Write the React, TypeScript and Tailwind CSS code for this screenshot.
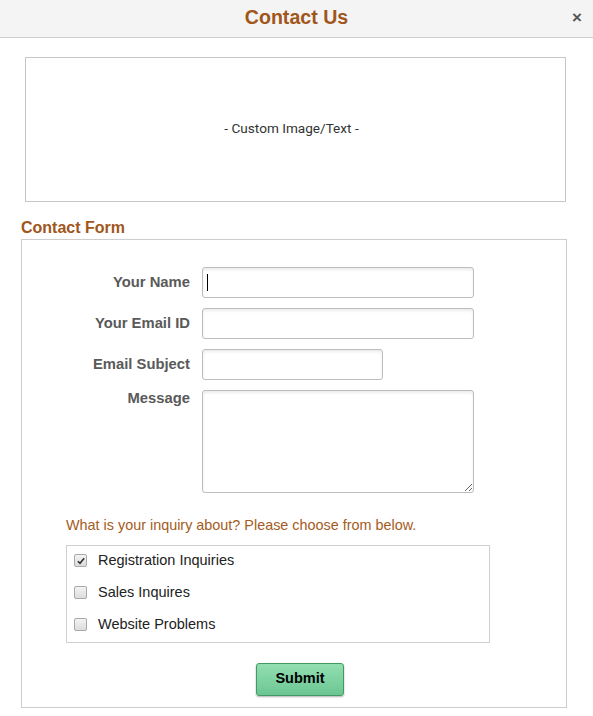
import { useState } from "react";

const options = ["Registration Inquiries", "Sales Inquires", "Website Problems"];

function Box({ checked }: { checked: boolean }) {
  return (
    <span className="flex h-[13px] w-[13px] items-center justify-center rounded-[2px] border border-[#a8a8a8] bg-gradient-to-b from-[#f4f4f4] to-[#dcdcdc]">
      {checked && (
        <svg viewBox="0 0 12 12" className="h-[10px] w-[10px]">
          <path d="M2.2 6.3 L4.8 8.8 L9.8 2.8" fill="none" stroke="#333" strokeWidth="2" />
        </svg>
      )}
    </span>
  );
}

export default function App() {
  const [picked, setPicked] = useState<string[]>(["Registration Inquiries"]);

  const toggle = (o: string) =>
    setPicked((p) => (p.includes(o) ? p.filter((x) => x !== o) : [...p, o]));

  const input =
    "h-[31px] rounded-[3px] border border-[#bdbdbd] bg-white px-2 text-[14px] shadow-[inset_0_2px_3px_rgba(0,0,0,0.08)] outline-none";
  const label = "text-right text-[14.8px] font-bold text-[#5a5a5a]";

  return (
    <div className="min-h-[716px] w-[593px] bg-white font-['Liberation_Sans',Arial,sans-serif]">
      <div className="relative flex h-[38px] items-center justify-center border-b border-[#cfcfcf] bg-[#f4f4f4]">
        <h1 className="-mt-[2px] text-[19.6px] font-bold text-[#a0561b]">Contact Us</h1>
        <button className="absolute right-[11px] top-[9px] text-[17px] font-bold leading-none text-[#555]">×</button>
      </div>

      <div className="ml-[25px] mr-[27px] mt-[19px] flex h-[145px] items-center justify-center border border-[#c6c6c6] pb-[2px] pr-[8px] font-['Roboto',sans-serif] text-[13.6px] text-[#333]">
        - Custom Image/Text -
      </div>

      <h2 className="ml-[21px] mt-[16px] text-[16px] font-bold leading-[20px] text-[#a0561b]">Contact Form</h2>

      <div className="ml-[21px] mr-[26px] mt-[1px] flex flex-col border border-[#cdcdcd] pb-[11px] pt-[27px]">
        <div className="grid grid-cols-[168px_auto] gap-x-[12px] gap-y-[10px]">
          <label className={`${label} self-center`}>Your Name</label>
          <div className="relative w-[272px]">
            <input className={`${input} w-full border-[#7aa5ec] shadow-[0_0_3px_rgba(80,140,240,0.6)]`} />
            <span className="absolute left-[5px] top-[7px] h-[17px] w-px bg-black" />
          </div>

          <label className={`${label} self-center`}>Your Email ID</label>
          <input className={`${input} w-[272px]`} />

          <label className={`${label} self-center`}>Email Subject</label>
          <input className={`${input} w-[181px]`} />

          <label className={`${label} leading-[16px]`}>Message</label>
          <textarea className={`${input} h-[103px] w-[272px] resize`} />
        </div>

        <p className="ml-[44px] mt-[22px] text-[14.4px] text-[#a45c22]">What is your inquiry about? Please choose from below.</p>

        <div className="ml-[44px] mt-[8px] flex w-[424px] flex-col border border-[#d0d0d0]">
          {options.map((o) => (
            <label key={o} onClick={() => toggle(o)} className="flex h-[32px] cursor-pointer items-center gap-[11px] pb-[2px] pl-[7px] text-[14.5px] text-[#222]">
              <Box checked={picked.includes(o)} />
              <span>{o}</span>
            </label>
          ))}
        </div>

        <button className="ml-[234px] mt-[20px] h-[33px] w-[88px] rounded-[3px] border border-[#3f9a64] bg-gradient-to-b from-[#93dfb2] to-[#6bc692] text-[14.5px] font-bold text-black shadow-[0_1px_2px_rgba(0,0,0,0.3)]">
          Submit
        </button>
      </div>
    </div>
  );
}
